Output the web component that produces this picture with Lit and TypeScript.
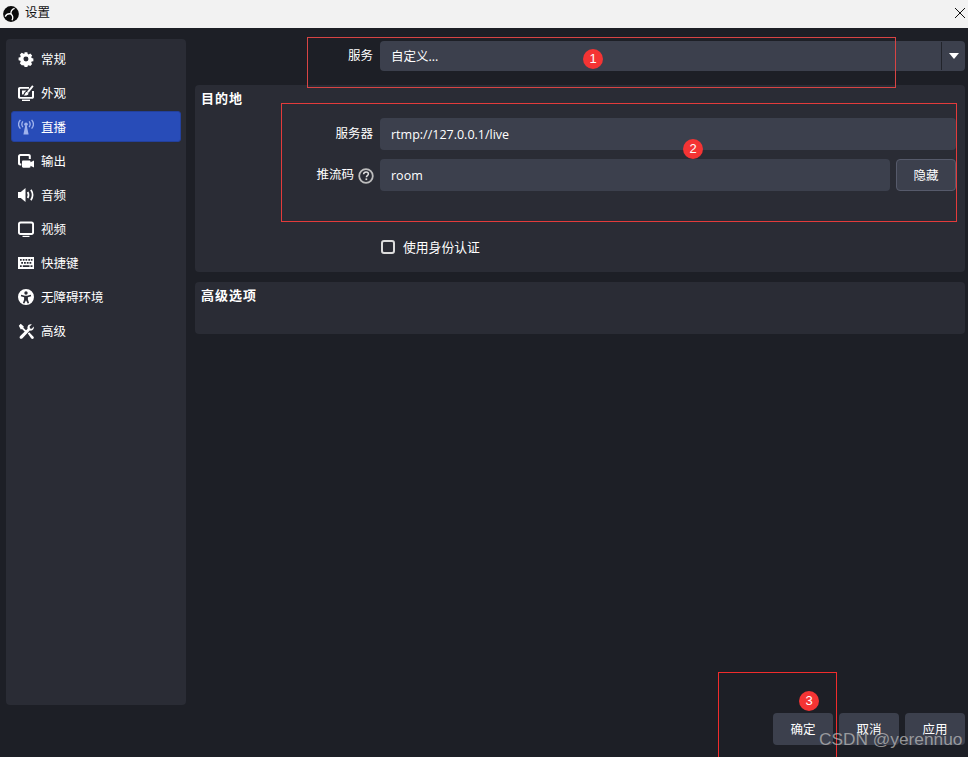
import { LitElement, html, css, svg } from "lit";
import { customElement } from "lit/decorators.js";

const icons: Record<string, unknown> = {
  gear: svg`<path fill-rule="evenodd" d="M6.400.5h3.200l.4 2 1.200.6 1.800-1.100 2.200 2.300-1.100 1.700.5 1.300 2 .4v3.200l-2 .4-.5 1.300 1.100 1.700-2.200 2.300-1.800-1.100-1.200.6-.4 2H6.400l-.4-2-1.200-.6L3 15.600.8 13.300l1.100-1.700-.5-1.300-2-.4V6.700l2-.4.500-1.300L.8 3.300 3 1l1.800 1.100L6 2.500zM8 5.400a2.900 2.900 0 1 0 0 5.800 2.900 2.900 0 0 0 0-5.800z" transform="translate(1.100 .8) scale(.86)"/>`,
  appearance: svg`<path d="M1.800 2H11v1.800H2.400a.4.4 0 0 0-.4.400v7.400c0 .2.200.4.400.4h11.200c.2 0 .4-.2.400-.4V6H16v6c0 1-.8 1.800-1.800 1.800H1.800C.8 13.800 0 13 0 12V3.800C0 2.800.8 2 1.800 2z"/><path d="M4 14.600h8V16H4z"/><path d="M14.200.3l1.400 1.200-5 6.300-1.600-1.300z"/><path d="M8 7.200c1-.7 2.300.1 2.400 1.200.1 1.500-1.500 2.300-4.700 2.100 1.200-.8 1.300-2.400 2.300-3.300z"/><path d="M4 5.500h4.500L6.500 7.300 5.300 9.500H4z"/>`,
  stream: svg`<path d="M7.200 6.800h1.600L10.600 15.500H5.400z"/><circle cx="8" cy="5.200" r="1.800"/><g fill="none" stroke="currentColor" stroke-width="1.300"><path d="M4.900 2.400c-1.300 1.700-1.300 4 0 5.700M11.100 2.400c1.300 1.700 1.300 4 0 5.700"/><path d="M2.400.9C.2 3.500.2 7 2.400 9.600M13.600.9c2.200 2.600 2.200 6.100 0 8.700"/></g>`,
  output: svg`<path d="M2.300 0h8.500c1.200 0 2 .8 2 2v3h-2V2.500c0-.3-.2-.5-.5-.5H2.500c-.3 0-.5.200-.5.500v6.500c0 .3.200.5.500.5h.8v2H2.300C1 11.500 0 10.800 0 9.500V2.300C0 1 1 0 2.300 0z" transform="translate(0 1)"/><path d="M5.300 7.500h6c.8 0 1.200.5 1.200 1.200v.6L16 7.500v7l-3.500-1.800v.8c0 .8-.5 1.200-1.200 1.200h-6C4.500 14.700 4 14.200 4 13.500V8.700C4 8 4.500 7.500 5.300 7.500z"/>`,
  audio: svg`<path d="M0 5h2.800L7.500 1v14L2.800 11H0z"/><g fill="none" stroke="currentColor" stroke-width="1.700"><path d="M9.700 5c1.100 1.900 1.100 4.100 0 6"/><path d="M12.900 2.800c2.100 3.200 2.100 7.200 0 10.400"/></g>`,
  video: svg`<path fill-rule="evenodd" d="M2.500.5h11C15 .5 16 1.500 16 3v8.500c0 1.400-1 2.500-2.500 2.500h-11C1 14 0 12.900 0 11.500V3C0 1.500 1 .5 2.500.5zm.3 1.900c-.5 0-.9.400-.9.900v7.900c0 .5.400.9.900.9h10.400c.5 0 .9-.4.900-.9V3.300c0-.5-.4-.9-.9-.9z"/><path d="M4.500 14.800h7V16h-7z"/>`,
  keys: svg`<path fill-rule="evenodd" d="M0 2h16v12H0zm2 2v1.800h1.700V4zm2.800 0v1.800h1.700V4zm2.700 0v1.800h1.700V4zm2.800 0v1.800H12V4zm2.500 0v1.800H14.500V4zM3.200 7v1.800H5V7zm2.800 0v1.800h1.800V7zm2.800 0v1.800h1.800V7zm2.700 0v1.800h1.800V7zM2 10.200V12h1.700v-1.800zm2.800 0V12h6.700v-1.800zm7.700 0V12H14.500v-1.800z"/>`,
  access: svg`<path fill-rule="evenodd" d="M8 0a8 8 0 1 1 0 16A8 8 0 0 1 8 0zm0 2.300a1.700 1.700 0 1 0 0 3.400 1.700 1.700 0 0 0 0-3.400zM3.200 5.800l-.4 1.400 3.300 1v2.200L4.900 14l1.400.5L8 11.200l1.700 3.300 1.400-.5-1.200-3.600V8.200l3.300-1-.4-1.400-3.600.9H6.800z"/>`,
  tools: svg`<path d="M.8 2.700L2.700.8l3.100 2.600-.4 1.300L8.700 8 7.400 9.300 4 6l-1.200.4z"/><path d="M15.700 3.500c.4 1.800-.3 3.400-2 4-.6.200-1.300.2-1.900 0L4.500 15.200c-.8.800-1.900.8-2.500.2s-.6-1.600.2-2.400l7.400-7.300c-.2-.7-.2-1.400 0-2 .6-1.800 2.400-2.700 4.200-2.200L11.600 3.600l.4 1.800 1.800.4z"/><path d="M9.800 10.600l1.400-1.400 4.100 4.300c.7.700.7 1.500.1 2.100s-1.500.5-2.100-.1z"/>`,
};

const navItems = [
  ["gear", "常规"],
  ["appearance", "外观"],
  ["stream", "直播"],
  ["output", "输出"],
  ["audio", "音频"],
  ["video", "视频"],
  ["keys", "快捷键"],
  ["access", "无障碍环境"],
  ["tools", "高级"],
];

@customElement("app-root")
export class AppRoot extends LitElement {
  static styles = css`
    :host {
      display: flex;
      flex-direction: column;
      position: relative;
      width: 968px;
      height: 757px;
      overflow: hidden;
      background: #1d1f26;
      color: #fff;
      font: 12.5px/20px "Open Sans", "Noto Sans CJK SC", sans-serif;
    }
    .titlebar {
      height: 28px;
      flex: none;
      display: flex;
      align-items: center;
      background: #f2f2f2;
      color: #111;
      padding: 0 2px 3px 3px;
      box-sizing: border-box;
    }
    .logo { width: 16px; height: 16px; margin: 3px 6px 0 0; }
    .title { flex: 1; }
    .close { width: 12px; height: 12px; }
    .body {
      flex: 1;
      display: flex;
      min-height: 0;
      padding: 11px 3px 0 6px;
      gap: 9px;
    }
    .sidebar {
      width: 180px;
      height: 666px;
      flex: none;
      box-sizing: border-box;
      background: #2a2c35;
      border-radius: 4px;
      padding: 4px 5px;
      display: flex;
      flex-direction: column;
      gap: 3px;
    }
    .nav {
      height: 31px;
      display: flex;
      align-items: center;
      gap: 7px;
      padding-left: 7px;
      border-radius: 3px;
      box-sizing: border-box;
      color: #fff;
    }
    .nav span { padding-top: 2px; }
    .nav svg { width: 16px; height: 16px; flex: none; fill: currentColor; }
    .nav.on { background: #284cb8; border: 1px solid #23409c; padding-left: 6px; }
    .nav.on svg { color: #9fb2ec; }
    .main { flex: 1; min-width: 0; display: flex; flex-direction: column; }
    .row {
      display: grid;
      grid-template-columns: 178px 1fr;
      column-gap: 7px;
      align-items: center;
    }
    .label { text-align: right; display: flex; justify-content: flex-end; align-items: center; gap: 4px; }
    .service { margin-top: 2px; margin-bottom: 14px; }
    .combo {
      height: 30px;
      background: #3c404d;
      border-radius: 4px;
      display: flex;
      align-items: center;
    }
    .combo .value { flex: 1; padding: 2px 0 0 11px; }
    .combo .sep { width: 1px; height: 28px; background: #22242b; }
    .combo .drop { width: 23px; display: flex; justify-content: center; }
    .arrow { width: 0; height: 0; border: 5px solid transparent; border-top: 6px solid #fff; border-bottom: 0; }
    .panel {
      background: #2a2c35;
      border-radius: 4px;
      padding: 3px 9px 0 6px;
    }
    .panel h3 { margin: 0; font-size: 13px; font-weight: 700; line-height: 20px; letter-spacing: 1px; }
    .dest { height: 187px; box-sizing: border-box; margin-bottom: 10px; }
    .adv { height: 52px; box-sizing: border-box; }
    .form { margin: 10px 0 0 -6px; display: flex; flex-direction: column; gap: 9px; }
    .input {
      height: 32px;
      background: #3c404d;
      border-radius: 4px;
      display: flex;
      align-items: center;
      padding: 2px 0 0 11px;
      flex: 1;
      box-sizing: border-box;
    }
    .inline { display: flex; gap: 6px; }
    .btn {
      width: 60px;
      height: 32px;
      box-sizing: border-box;
      display: flex;
      align-items: center;
      justify-content: center;
      padding-top: 2px;
      background: #3c404d;
      border-radius: 4px;
    }
    .btn.outlined { border: 1px solid #565a6b; }
    .help { width: 16px; height: 16px; margin: 1px -1px 0 0; }
    .check { display: flex; align-items: center; gap: 8px; margin: 46px 0 0 180px; font-size: 12.8px; }
    .box {
      width: 10px;
      height: 10px;
      border: 2px solid #dcdcdc;
      border-radius: 3px;
    }
    .footer {
      flex: none;
      display: flex;
      justify-content: flex-end;
      gap: 6px;
      padding: 8px 3px 12px 0;
    }
    .ann { position: absolute; box-sizing: border-box; border: 1px solid #e33b3b; pointer-events: none; }
    .a1 { left: 307px; top: 37px; width: 589px; height: 51px; border-color: #d84444; }
    .a2 { left: 281px; top: 103px; width: 676px; height: 119px; border-color: #e33b3b; }
    .a3 { left: 718px; top: 672px; width: 119px; height: 100px; border-color: #f02c2c; }
    .badge {
      position: absolute;
      width: 20px;
      height: 20px;
      border-radius: 50%;
      background: #f43434;
      color: #fff;
      font: 13px/20px "Liberation Sans", sans-serif;
      text-align: center;
    }
    .b1 { left: 583px; top: 49px; }
    .b2 { left: 683px; top: 139px; }
    .b3 { left: 799px; top: 691px; }
    .mark {
      position: absolute;
      left: 819px;
      top: 728px;
      font: 17.3px/22px "Liberation Sans", sans-serif;
      color: rgba(190, 190, 190, .72);
      white-space: nowrap;
    }
  `;

  render() {
    return html`
      <div class="titlebar">
        <svg class="logo" viewBox="0 0 16 16">
          <circle cx="8" cy="8" r="7.900" fill="#0b0b0b" />
          <g fill="none" stroke="#fff" stroke-width="1.300">
            <path d="M8 8c-.3-2 .6-4.500 3.600-5.700" />
            <path d="M8 8c-1.900-.5-4.300-.2-5.800 2.600" />
            <path d="M8 8c1.400 1.300 2.500 3.500 1 6.300" />
          </g>
        </svg>
        <span class="title">设置</span>
        <svg class="close" viewBox="0 0 12 12"><path d="M1 1l10 10M11 1L1 11" stroke="#111" stroke-width="1" fill="none" /></svg>
      </div>
      <div class="body">
        <nav class="sidebar">
          ${navItems.map(
            ([icon, label]) => html`
              <div class="nav ${label === "直播" ? "on" : ""}">
                <svg viewBox="0 0 16 16">${icons[icon]}</svg>
                <span>${label}</span>
              </div>
            `,
          )}
        </nav>
        <div class="main">
          <div class="row service">
            <div class="label">服务</div>
            <div class="combo">
              <span class="value">自定义...</span>
              <span class="sep"></span>
              <span class="drop"><span class="arrow"></span></span>
            </div>
          </div>
          <section class="panel dest">
            <h3>目的地</h3>
            <div class="form">
              <div class="row">
                <div class="label">服务器</div>
                <div class="input">rtmp://127.0.0.1/live</div>
              </div>
              <div class="row">
                <div class="label">
                  <span>推流码</span>
                  <svg class="help" viewBox="0 0 16 16">
                    <circle cx="8" cy="8" r="6.800" fill="none" stroke="#bdbdbd" stroke-width="1.800" />
                    <path d="M5.600 6.300c.1-1.400 1.100-2.200 2.500-2.200s2.300.8 2.300 2c0 1.600-2 1.500-2 3.200" fill="none" stroke="#e0e0e0" stroke-width="1.500" />
                    <rect x="7.500" y="10.400" width="1.700" height="1.700" fill="#e0e0e0" />
                  </svg>
                </div>
                <div class="inline">
                  <div class="input">room</div>
                  <div class="btn outlined">隐藏</div>
                </div>
              </div>
            </div>
            <div class="check"><span class="box"></span><span>使用身份认证</span></div>
          </section>
          <section class="panel adv"><h3>高级选项</h3></section>
        </div>
      </div>
      <div class="footer">
        <div class="btn">确定</div>
        <div class="btn">取消</div>
        <div class="btn">应用</div>
      </div>
      <div class="ann a1"></div>
      <div class="ann a2"></div>
      <div class="ann a3"></div>
      <div class="badge b1">1</div>
      <div class="badge b2">2</div>
      <div class="badge b3">3</div>
      <div class="mark">CSDN @yerennuo</div>
    `;
  }
}
